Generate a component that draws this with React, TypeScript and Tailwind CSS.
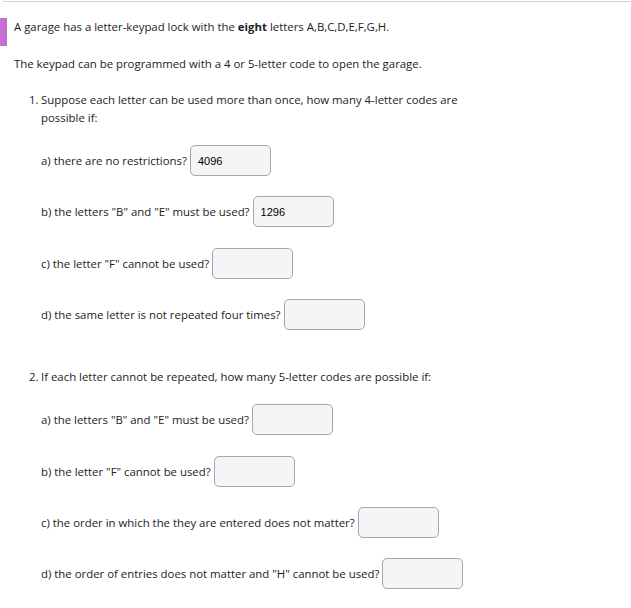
import React from "react";

const font = { fontFamily: '"Open Sans", "Noto Sans", sans-serif' };

function Box({ value }: { value?: string }) {
  return (
    <div
      className="w-[81px] h-[31px] shrink-0 rounded-[5px] border border-[#a3a6aa] bg-[#f4f5f6] flex items-center pl-[7px] text-[11px] text-black ml-[3px]"
      style={{ fontFamily: '"Liberation Sans", Arial, sans-serif' }}
    >
      {value}
    </div>
  );
}

function Row({ label, value, mt }: { label: string; value?: string; mt: string }) {
  return (
    <div className={`flex items-center ml-[41px] ${mt}`}>
      <span>{label}</span>
      <Box value={value} />
    </div>
  );
}

export default function App() {
  return (
    <div className="w-[631px] h-[608px] bg-white text-[#1d2125] text-[11.4px] leading-[18px]" style={font}>
      <div className="pt-px">
        <div className="ml-[3px] w-[627px] h-px bg-[#d2d2d2]" />
      </div>
      <div className="flex items-start mt-[16px]">
        <div className="w-[7px] h-[28px] bg-[#c66fd6]" />
        <p className="ml-[7px]">
          A garage has a letter-keypad lock with the <b className="font-bold">eight</b> letters A,B,C,D,E,F,G,H.
        </p>
      </div>
      <p className="ml-[14px] mt-[9px]">The keypad can be programmed with a 4 or 5-letter code to open the garage.</p>

      <div className="flex ml-[29px] mt-[18px]">
        <span className="w-[12px]">1.</span>
        <span className="w-[425px]">
          Suppose each letter can be used more than once, how many 4-letter codes are possible if:
        </span>
      </div>
      <Row label="a) there are no restrictions?" value="4096" mt="mt-[18px]" />
      <Row label='b) the letters "B" and "E" must be used?' value="1296" mt="mt-[20px]" />
      <Row label='c) the letter "F" cannot be used?' mt="mt-[21px]" />
      <Row label="d) the same letter is not repeated four times?" mt="mt-[20px]" />

      <div className="flex ml-[29px] mt-[38px]">
        <span className="w-[12px]">2.</span>
        <span>If each letter cannot be repeated, how many 5-letter codes are possible if:</span>
      </div>
      <Row label='a) the letters "B" and "E" must be used?' mt="mt-[18px]" />
      <Row label='b) the letter "F" cannot be used?' mt="mt-[21px]" />
      <Row label="c) the order in which the they are entered does not matter?" mt="mt-[20px]" />
      <Row label='d) the order of entries does not matter and "H" cannot be used?' mt="mt-[20px]" />
    </div>
  );
}
